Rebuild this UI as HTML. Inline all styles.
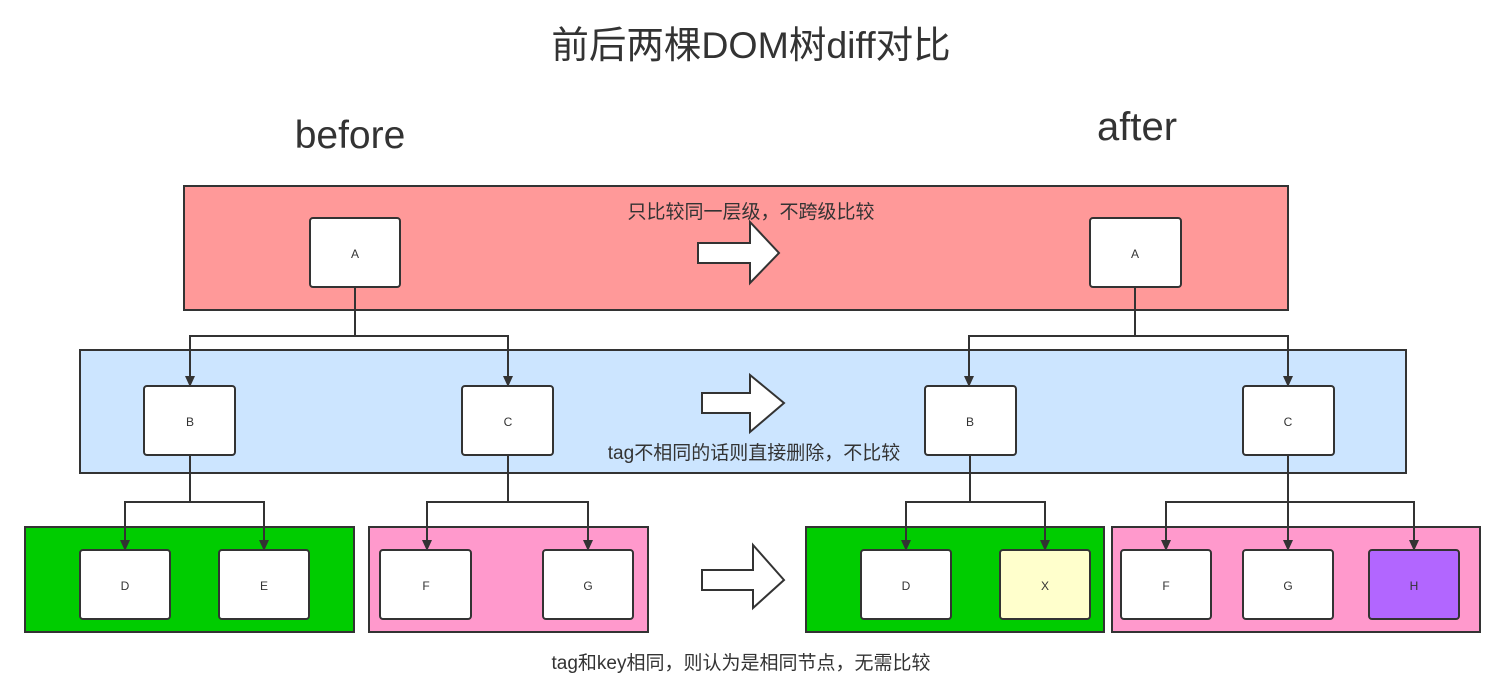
<!DOCTYPE html><html><head><meta charset="utf-8"><style>body{margin:0;background:#fff}svg{display:block}text{font-family:"Liberation Sans","Noto Sans CJK SC",sans-serif;fill:#333}</style></head><body>
<svg width="1506" height="700" viewBox="0 0 1506 700">
<text x="751" y="58" font-size="37.5" text-anchor="middle">前后两棵DOM树diff对比</text>
<text x="350" y="148" font-size="39" text-anchor="middle">before</text>
<text x="1137" y="140" font-size="40" text-anchor="middle">after</text>
<g stroke="#333" stroke-width="2">
<rect x="184" y="186" width="1104" height="124" fill="#ff9999"/>
<rect x="80" y="350" width="1326" height="123" fill="#cce5ff"/>
<rect x="25" y="527" width="329" height="105" fill="#00cc00"/>
<rect x="369" y="527" width="279" height="105" fill="#ff99cc"/>
<rect x="806" y="527" width="298" height="105" fill="#00cc00"/>
<rect x="1112" y="527" width="368" height="105" fill="#ff99cc"/>
<g fill="none">
<path d="M355,287V336H190V378M355,336H508V378"/>
<path d="M1135,287V336H969V378M1135,336H1288V378"/>
<path d="M190,455V502H125V542M190,502H264V542"/>
<path d="M508,455V502H427V542M508,502H588V542"/>
<path d="M970,455V502H906V542M970,502H1045V542"/>
<path d="M1288,455V502H1166V542M1288,502H1414V542M1288,502V542"/>
</g>
</g>
<g fill="#333">
<path d="M185,376h10l-5,11z"/><path d="M503,376h10l-5,11z"/><path d="M964,376h10l-5,11z"/><path d="M1283,376h10l-5,11z"/>
<path d="M120,540h10l-5,11z"/><path d="M259,540h10l-5,11z"/><path d="M422,540h10l-5,11z"/><path d="M583,540h10l-5,11z"/>
<path d="M901,540h10l-5,11z"/><path d="M1040,540h10l-5,11z"/><path d="M1161,540h10l-5,11z"/><path d="M1283,540h10l-5,11z"/><path d="M1409,540h10l-5,11z"/>
</g>
<g stroke="#333" stroke-width="2" fill="#fff">
<rect x="310" y="218" width="90" height="69" rx="3"/>
<rect x="1090" y="218" width="91" height="69" rx="3"/>
<rect x="144" y="386" width="91" height="69" rx="3"/>
<rect x="462" y="386" width="91" height="69" rx="3"/>
<rect x="925" y="386" width="91" height="69" rx="3"/>
<rect x="1243" y="386" width="91" height="69" rx="3"/>
<rect x="80" y="550" width="90" height="69" rx="3"/>
<rect x="219" y="550" width="90" height="69" rx="3"/>
<rect x="380" y="550" width="91" height="69" rx="3"/>
<rect x="543" y="550" width="90" height="69" rx="3"/>
<rect x="861" y="550" width="90" height="69" rx="3"/>
<rect x="1000" y="550" width="90" height="69" rx="3" fill="#ffffcc"/>
<rect x="1121" y="550" width="90" height="69" rx="3"/>
<rect x="1243" y="550" width="90" height="69" rx="3"/>
<rect x="1369" y="550" width="90" height="69" rx="3" fill="#b266ff"/>
<path d="M698,243H750V222L779,253L750,283V263H698Z"/>
<path d="M702,393H750V375L784,403L750,432V413H702Z"/>
<path d="M702,570H753V545L784,580L753,608V590H702Z"/>
</g>
<g font-size="12" text-anchor="middle">
<text x="355" y="258">A</text><text x="1135" y="258">A</text>
<text x="190" y="426">B</text><text x="508" y="426">C</text><text x="970" y="426">B</text><text x="1288" y="426">C</text>
<text x="125" y="590">D</text><text x="264" y="590">E</text><text x="426" y="590">F</text><text x="588" y="590">G</text>
<text x="906" y="590">D</text><text x="1045" y="590">X</text><text x="1166" y="590">F</text><text x="1288" y="590">G</text><text x="1414" y="590">H</text>
</g>
<g font-size="19" text-anchor="middle">
<text x="751" y="218">只比较同一层级，不跨级比较</text>
<text x="754" y="459">tag不相同的话则直接删除，不比较</text>
<text x="741" y="669">tag和key相同，则认为是相同节点，无需比较</text>
</g>
</svg></body></html>
